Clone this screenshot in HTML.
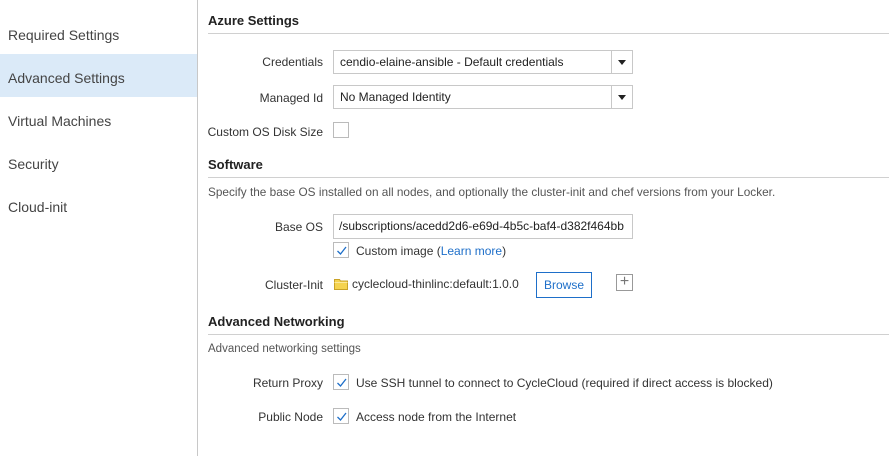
<!DOCTYPE html>
<html><head><style>
body{margin:0;width:889px;height:456px;background:#fff;font-family:"Liberation Sans",sans-serif;color:#333;position:relative;overflow:hidden}
.a{position:absolute;white-space:nowrap}
.side{font-size:14px;color:#444;left:8px}
.hd{font-size:13px;font-weight:bold;color:#222;left:208px}
.rule{position:absolute;left:208px;right:0;height:1px;background:#d0d0d0}
.lbl{font-size:12px;color:#333;right:566px;text-align:right}
.box{position:absolute;border:1px solid #c8c8c8;background:#fff;box-sizing:border-box;font-size:12px;color:#222;padding-left:6px;white-space:nowrap;overflow:hidden}
.dd{position:absolute;right:0;top:0;bottom:0;width:20px;border-left:1px solid #c8c8c8}
.dd:after{content:"";position:absolute;left:6px;top:9px;border:4px solid transparent;border-top:5px solid #222}
.cb{position:absolute;width:16px;height:16px;border:1px solid #bbb;box-sizing:border-box;background:#fff}
.cb svg{position:absolute;left:2px;top:2px}
.txt{font-size:12px;color:#333}
</style></head><body>
<div class="a" style="left:0;top:54px;width:197px;height:43px;background:#dbeaf8"></div>
<div class="a" style="left:197px;top:0;width:1px;height:456px;background:#c8c8c8"></div>
<div class="a side" style="top:27px">Required Settings</div>
<div class="a side" style="top:70px">Advanced Settings</div>
<div class="a side" style="top:113px">Virtual Machines</div>
<div class="a side" style="top:156px">Security</div>
<div class="a side" style="top:199px">Cloud-init</div>

<div class="a hd" style="top:13px">Azure Settings</div>
<div class="rule" style="top:33px"></div>
<div class="a lbl" style="top:55px">Credentials</div>
<div class="box" style="left:333px;top:50px;width:300px;height:24px;line-height:22px">cendio-elaine-ansible - Default credentials<div class="dd"></div></div>
<div class="a lbl" style="top:91px">Managed Id</div>
<div class="box" style="left:333px;top:85px;width:300px;height:24px;line-height:22px">No Managed Identity<div class="dd"></div></div>
<div class="a lbl" style="top:125px">Custom OS Disk Size</div>
<div class="cb" style="left:333px;top:122px"></div>

<div class="a hd" style="top:157px">Software</div>
<div class="rule" style="top:177px"></div>
<div class="a" style="left:208px;top:185px;font-size:11.8px;color:#555">Specify the base OS installed on all nodes, and optionally the cluster-init and chef versions from your Locker.</div>
<div class="a lbl" style="top:220px">Base OS</div>
<div class="box" style="left:333px;top:214px;width:300px;height:25px;line-height:23px;padding-left:5px">/subscriptions/acedd2d6-e69d-4b5c-baf4-d382f464bb</div>
<div class="cb" style="left:333px;top:242px"><svg width="11" height="11"><path d="M1.5 6 L4.5 9 L10 2" stroke="#1e6fc9" stroke-width="1.3" fill="none"/></svg></div>
<div class="a txt" style="left:356px;top:244px">Custom image (<span style="color:#1e6fc9">Learn more</span>)</div>
<div class="a lbl" style="top:278px">Cluster-Init</div>
<svg class="a" style="left:334px;top:278px" width="14" height="12"><path d="M0.5 1.5h5l1 1.5h7v8.5h-13z" fill="#f5d34f" stroke="#c9a227"/><path d="M0.5 4.5h13" stroke="#fbe89a"/></svg>
<div class="a txt" style="left:352px;top:277px">cyclecloud-thinlinc:default:1.0.0</div>
<div class="a" style="left:536px;top:272px;width:54px;height:24px;border:1px solid #1e6fc9;font-size:12px;color:#1e6fc9;text-align:center;line-height:24px">Browse</div>
<div class="a" style="left:616px;top:274px;width:15px;height:15px;border:1px solid #999;color:#777;font-size:16px;line-height:14px;text-align:center">+</div>

<div class="a hd" style="top:314px">Advanced Networking</div>
<div class="rule" style="top:334px"></div>
<div class="a" style="left:208px;top:343px;font-size:11.5px;color:#555">Advanced networking settings</div>
<div class="a lbl" style="top:376px">Return Proxy</div>
<div class="cb" style="left:333px;top:374px"><svg width="11" height="11"><path d="M1.5 6 L4.5 9 L10 2" stroke="#1e6fc9" stroke-width="1.3" fill="none"/></svg></div>
<div class="a txt" style="left:356px;top:376px">Use SSH tunnel to connect to CycleCloud (required if direct access is blocked)</div>
<div class="a lbl" style="top:410px">Public Node</div>
<div class="cb" style="left:333px;top:408px"><svg width="11" height="11"><path d="M1.5 6 L4.5 9 L10 2" stroke="#1e6fc9" stroke-width="1.3" fill="none"/></svg></div>
<div class="a txt" style="left:356px;top:410px">Access node from the Internet</div>
</body></html>
